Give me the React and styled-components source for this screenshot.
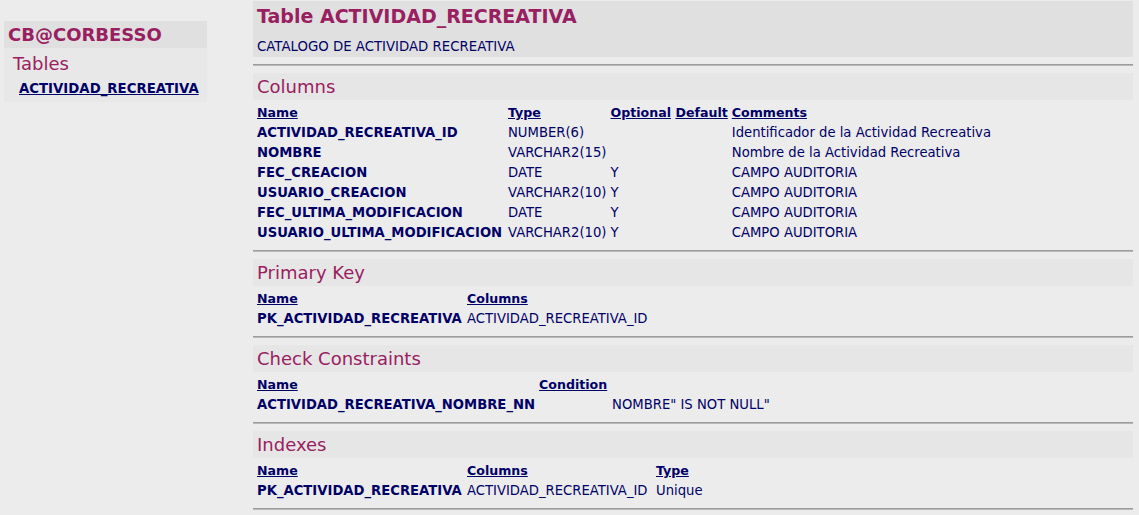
import React from 'react';
import styled, { createGlobalStyle } from 'styled-components';

const GlobalStyle = createGlobalStyle`
  html, body {
    margin: 0;
    padding: 0;
    background: #ececec;
  }
  body {
    font-family: Verdana, "DejaVu Sans", sans-serif;
    color: #000066;
  }
`;

const Page = styled.div`
  display: flex;
  align-items: flex-start;
  width: 1139px;
  height: 515px;
  overflow: hidden;
`;

const Sidebar = styled.div`
  margin: 21px 0 0 4px;
  width: 203px;
  background: #e8e8e8;
  padding-bottom: 4px;
`;

const SideTitle = styled.div`
  height: 27px;
  line-height: 28px;
  padding-left: 4px;
  background: #e0e0e0;
  color: #992060;
  font-size: 18px;
  font-weight: bold;
`;

const SideGroup = styled.div`
  padding: 3px 0 0 9px;
  height: 26px;
  line-height: 26px;
  color: #992060;
  font-size: 18px;
`;

const SideLink = styled.a`
  display: block;
  padding: 3px 0 0 15px;
  line-height: 18px;
  font-size: 13.3px;
  font-weight: bold;
  color: #000066;
  text-decoration: underline;
`;

const Main = styled.div`
  margin: 1px 0 0 46px;
  width: 880px;
`;

const TitleBand = styled.div`
  background: #e0e0e0;
  height: 56px;
  padding: 0 4px;
`;

const Title = styled.h1`
  margin: 0;
  padding-top: 3px;
  line-height: 24px;
  font-size: 19px;
  font-weight: bold;
  color: #992060;
`;

const Subtitle = styled.div`
  margin-top: 11px;
  font-size: 13.3px;
  line-height: 16px;
`;

const Rule = styled.div`
  height: 2px;
  margin-top: ${(p) => p.$top}px;
  background: linear-gradient(#9c9c9c 50%, #b8b8b8 50%);
`;

const Band = styled.h2`
  margin: 7px 0 0;
  height: 27px;
  line-height: 28px;
  padding-left: 4px;
  background: #e6e6e6;
  color: #992060;
  font-size: 18px;
  font-weight: normal;
`;

const Table = styled.table`
  margin: 3px 0 0 2px;
  border-collapse: collapse;
  font-size: 13.2px;
`;

const Th = styled.th`
  box-sizing: border-box;
  height: 20px;
  padding: 0 2px;
  line-height: 20px;
  text-align: left;
  font-size: 12.6px;
  font-weight: bold;
  text-decoration: underline;
  white-space: nowrap;
  width: ${(p) => (p.$w ? `${p.$w}px` : 'auto')};
`;

const Td = styled.td`
  height: 20px;
  padding: 0 2px 0 ${(p) => p.$indent || 2}px;
  line-height: 20px;
  vertical-align: bottom;
  white-space: nowrap;
  font-weight: ${(p) => (p.$bold ? 'bold' : 'normal')};
`;

const columns = [
  ['ACTIVIDAD_RECREATIVA_ID', 'NUMBER(6)', '', '', 'Identificador de la Actividad Recreativa'],
  ['NOMBRE', 'VARCHAR2(15)', '', '', 'Nombre de la Actividad Recreativa'],
  ['FEC_CREACION', 'DATE', 'Y', '', 'CAMPO AUDITORIA'],
  ['USUARIO_CREACION', 'VARCHAR2(10)', 'Y', '', 'CAMPO AUDITORIA'],
  ['FEC_ULTIMA_MODIFICACION', 'DATE', 'Y', '', 'CAMPO AUDITORIA'],
  ['USUARIO_ULTIMA_MODIFICACION', 'VARCHAR2(10)', 'Y', '', 'CAMPO AUDITORIA'],
];

const sections = [
  {
    title: 'Columns',
    heads: ['Name', 'Type', 'Optional', 'Default', 'Comments'],
    widths: [251, 99, 65, 56],
    rows: columns,
  },
  {
    title: 'Primary Key',
    heads: ['Name', 'Columns'],
    widths: [210],
    rows: [['PK_ACTIVIDAD_RECREATIVA', 'ACTIVIDAD_RECREATIVA_ID']],
  },
  {
    title: 'Check Constraints',
    heads: ['Name', 'Condition'],
    widths: [282],
    rows: [['ACTIVIDAD_RECREATIVA_NOMBRE_NN', 'NOMBRE" IS NOT NULL"']],
    indents: [2, 75],
  },
  {
    title: 'Indexes',
    heads: ['Name', 'Columns', 'Type'],
    widths: [210, 189],
    rows: [['PK_ACTIVIDAD_RECREATIVA', 'ACTIVIDAD_RECREATIVA_ID', 'Unique']],
  },
];

const Section = ({ title, heads, widths = [], rows, indents = [] }) => (
  <>
    <Band>{title}</Band>
    <Table>
      <thead>
        <tr>
          {heads.map((h, i) => (
            <Th key={h} $w={widths[i]}>{h}</Th>
          ))}
        </tr>
      </thead>
      <tbody>
        {rows.map((r) => (
          <tr key={r[0]}>
            {r.map((c, i) => (
              <Td key={i} $bold={i === 0} $indent={indents[i]}>{c}</Td>
            ))}
          </tr>
        ))}
      </tbody>
    </Table>
    <Rule $top={7} />
  </>
);

export default function App() {
  return (
    <>
      <GlobalStyle />
      <Page>
        <Sidebar>
          <SideTitle>CB@CORBESSO</SideTitle>
          <SideGroup>Tables</SideGroup>
          <SideLink href="#">ACTIVIDAD_RECREATIVA</SideLink>
        </Sidebar>
        <Main>
          <TitleBand>
            <Title>Table ACTIVIDAD_RECREATIVA</Title>
            <Subtitle>CATALOGO DE ACTIVIDAD RECREATIVA</Subtitle>
          </TitleBand>
          <Rule $top={7} />
          {sections.map((s) => (
            <Section key={s.title} {...s} />
          ))}
        </Main>
      </Page>
    </>
  );
}
